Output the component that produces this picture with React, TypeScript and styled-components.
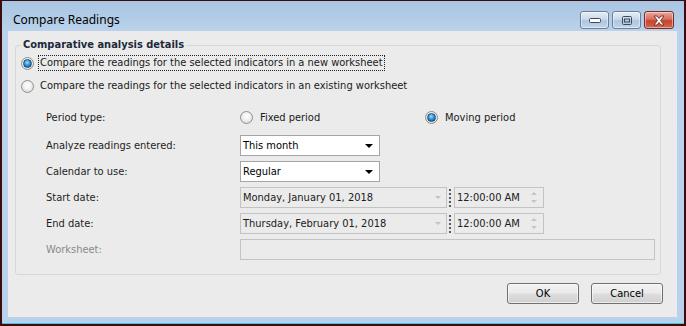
import React from "react";
import styled, { createGlobalStyle } from "styled-components";

const GlobalStyle = createGlobalStyle`
  html, body {
    margin: 0;
    padding: 0;
    background: #ffffff;
  }
  * {
    box-sizing: border-box;
  }
`;

const Window = styled.div`
  width: 686px;
  height: 326px;
  background-color: #3a0c0c;
  padding: 1px 2px 2px 2px;
  display: flex;
  font-family: Tahoma, "DejaVu Sans Condensed", "Liberation Sans", sans-serif;
  font-size: 11px;
  color: #1a1a1a;
`;

const Frame = styled.div`
  flex: 1;
  display: flex;
  flex-direction: column;
  background: linear-gradient(#a8c5e3 0px, #bad2eb 30px, #b9d1ea 100%);
  border-bottom: 1px solid #3fc5e6;
  padding: 0 7px 6px 6px;
`;

const TitleBar = styled.div`
  height: 30px;
  display: flex;
  align-items: flex-start;
  justify-content: space-between;
  padding: 0 3px 0 5px;
`;

const TitleText = styled.span`
  margin-top: 10px;
  font-family: "Noto Sans", "Open Sans", sans-serif;
  font-size: 12px;
  color: #000000;
`;

const CaptionButtons = styled.div`
  margin-top: 10px;
  display: flex;
  gap: 3px;
`;

interface CaptionButtonProps {
  close?: boolean;
}

const CaptionButton = styled.div<CaptionButtonProps>`
  width: ${p => (p.close ? 30 : 29)}px;
  height: 18px;
  border: 1px solid ${p => (p.close ? "#7a2a22" : "#6d7f95")};
  border-radius: 3px;
  display: flex;
  align-items: center;
  justify-content: center;
  background: ${p =>
    p.close
      ? "linear-gradient(#e9a99c 0%, #d7705c 45%, #c7432c 55%, #d2674f 100%)"
      : "linear-gradient(#e6eef7 0%, #c9d9ea 45%, #afc6df 55%, #c2d6ea 100%)"};
  box-shadow: inset 0 0 0 1px rgba(255, 255, 255, 0.45);
`;

const Client = styled.div`
  flex: 1;
  background-color: #ebebeb;
  display: flex;
  flex-direction: column;
  padding: 14px 0 0 7px;
`;

const GroupBox = styled.div`
  position: relative;
  height: 230px;
  margin-right: 16px;
  border: 1px solid #d3d8dc;
  border-radius: 3px;
  display: flex;
  flex-direction: column;
`;

const Legend = styled.span`
  position: absolute;
  top: -8px;
  left: 5px;
  padding: 0 2px;
  background-color: #ebebeb;
  font-weight: bold;
  color: #1c2a3c;
`;

const RadioList = styled.div`
  padding: 9px 0 0 5px;
  display: flex;
  flex-direction: column;
  gap: 7px;
`;

interface FocusProps {
  focused?: boolean;
}

const RadioLabel = styled.label`
  display: flex;
  align-items: center;
  height: 16px;
  gap: 5px;
`;

const RadioText = styled.span<FocusProps>`
  padding: 0 1px;
  line-height: 14px;
  outline: ${p => (p.focused ? "1px dotted #222" : "none")};
`;

interface RadioCircleProps {
  checked?: boolean;
}

const RadioCircle = styled.span<RadioCircleProps>`
  width: 13px;
  height: 13px;
  border-radius: 50%;
  border: 1px solid #8e8f8f;
  background: radial-gradient(circle at 50% 40%, #ffffff 0%, #f0f0f0 45%, #cfcfcf 100%);
  display: flex;
  align-items: center;
  justify-content: center;
  flex-shrink: 0;

  &::after {
    content: "";
    display: ${p => (p.checked ? "block" : "none")};
    width: 7px;
    height: 7px;
    border-radius: 50%;
    border: 1px solid #1b4d7a;
    background: radial-gradient(circle at 45% 35%, #9fdcfb 0%, #2d8ecf 50%, #0e4a86 100%);
  }
`;

const Form = styled.div`
  margin-top: 10px;
  padding: 0 5px 0 30px;
  display: grid;
  grid-template-columns: 194px 1fr;
  grid-template-rows: 26px repeat(5, 21px);
  row-gap: 5px;
  align-items: center;
`;

interface FieldLabelProps {
  disabled?: boolean;
}

const FieldLabel = styled.span<FieldLabelProps>`
  color: ${p => (p.disabled ? "#8a8a8a" : "#1e1e1e")};
`;

const PeriodRow = styled.div`
  display: flex;
  align-items: center;
`;

const PeriodOption = styled.label`
  display: flex;
  align-items: center;
  gap: 7px;
  width: 185px;
`;

const Combo = styled.div`
  width: 140px;
  height: 21px;
  border: 1px solid #a6a6a6;
  background-color: #ffffff;
  display: flex;
  align-items: center;
  justify-content: space-between;
  padding: 0 6px 0 2px;
  color: #000000;
`;

interface ArrowProps {
  light?: boolean;
}

const Arrow = styled.span<ArrowProps>`
  width: 0;
  height: 0;
  border-left: ${p => (p.light ? 3 : 4)}px solid transparent;
  border-right: ${p => (p.light ? 3 : 4)}px solid transparent;
  border-top: ${p => (p.light ? 3 : 4)}px solid ${p => (p.light ? "#c4c4c4" : "#000000")};
`;

const DateRow = styled.div`
  display: flex;
  align-items: center;
  height: 21px;
`;

const DateBox = styled.div`
  width: 207px;
  height: 21px;
  border: 1px solid #c3c3c3;
  display: flex;
  align-items: center;
  justify-content: space-between;
  padding: 0 5px 0 2px;
  color: #202020;
`;

const Splitter = styled.span`
  width: 0;
  height: 18px;
  margin: 0 3px 0 2px;
  border-left: 2px dotted #5a5a5a;
`;

const TimeBox = styled.div`
  width: 90px;
  height: 21px;
  border: 1px solid #c3c3c3;
  display: flex;
  align-items: center;
  justify-content: space-between;
  padding: 0 6px 0 2px;
  color: #202020;
`;

const Spinner = styled.span`
  display: flex;
  flex-direction: column;
  gap: 5px;
`;

const UpArrow = styled.span`
  width: 0;
  height: 0;
  border-left: 3px solid transparent;
  border-right: 3px solid transparent;
  border-bottom: 3px solid #c4c4c4;
`;

const TextBox = styled.div`
  width: 415px;
  height: 21px;
  border: 1px solid #c3c3c3;
`;

const ButtonRow = styled.div`
  margin-top: 8px;
  padding-right: 14px;
  display: flex;
  justify-content: flex-end;
  gap: 12px;
`;

const PushButton = styled.button`
  width: 72px;
  height: 21px;
  border: 1px solid #707070;
  border-radius: 3px;
  background: linear-gradient(#f2f2f2 0%, #ebebeb 45%, #dddddd 55%, #cfcfcf 100%);
  box-shadow: inset 0 0 0 1px rgba(255, 255, 255, 0.6);
  font-family: Tahoma, "DejaVu Sans Condensed", "Liberation Sans", sans-serif;
  font-size: 11px;
  color: #000000;
  padding: 0;
`;

function MinimizeGlyph() {
  return (
    <svg width="12" height="6" viewBox="0 0 12 6">
      <rect x="0.5" y="1.5" width="11" height="4" rx="1" fill="#ffffff" stroke="#3a4b60" />
    </svg>
  );
}

function MaximizeGlyph() {
  return (
    <svg width="10" height="9" viewBox="0 0 10 9">
      <rect x="0.5" y="0.5" width="9" height="8" rx="1" fill="none" stroke="#3a4b60" />
      <rect x="2.5" y="3" width="5" height="3" fill="none" stroke="#3a4b60" />
    </svg>
  );
}

function CloseGlyph() {
  return (
    <svg width="14" height="11" viewBox="0 0 14 11">
      <path
        d="M2 1 L5 1 L7 3.5 L9 1 L12 1 L8.6 5.5 L12 10 L9 10 L7 7.5 L5 10 L2 10 L5.4 5.5 Z"
        fill="#ffffff"
        stroke="#6b2a20"
        strokeWidth="0.9"
        strokeLinejoin="round"
      />
    </svg>
  );
}

interface RadioProps {
  checked?: boolean;
  focused?: boolean;
  text: string;
}

function Radio(props: RadioProps) {
  const { checked, focused, text } = props;
  return (
    <RadioLabel>
      <RadioCircle checked={checked} />
      <RadioText focused={focused}>{text}</RadioText>
    </RadioLabel>
  );
}

export default function App(): JSX.Element {
  return (
    <>
      <GlobalStyle />
      <Window>
        <Frame>
          <TitleBar>
            <TitleText>Compare Readings</TitleText>
            <CaptionButtons>
              <CaptionButton>
                <MinimizeGlyph />
              </CaptionButton>
              <CaptionButton>
                <MaximizeGlyph />
              </CaptionButton>
              <CaptionButton close>
                <CloseGlyph />
              </CaptionButton>
            </CaptionButtons>
          </TitleBar>
          <Client>
            <GroupBox>
              <Legend>Comparative analysis details</Legend>
              <RadioList>
                <Radio checked focused text="Compare the readings for the selected indicators in a new worksheet" />
                <Radio text="Compare the readings for the selected indicators in an existing worksheet" />
              </RadioList>
              <Form>
                <FieldLabel>Period type:</FieldLabel>
                <PeriodRow>
                  <PeriodOption>
                    <RadioCircle />
                    <span>Fixed period</span>
                  </PeriodOption>
                  <PeriodOption>
                    <RadioCircle checked />
                    <span>Moving period</span>
                  </PeriodOption>
                </PeriodRow>

                <FieldLabel>Analyze readings entered:</FieldLabel>
                <Combo>
                  <span>This month</span>
                  <Arrow />
                </Combo>

                <FieldLabel>Calendar to use:</FieldLabel>
                <Combo>
                  <span>Regular</span>
                  <Arrow />
                </Combo>

                <FieldLabel>Start date:</FieldLabel>
                <DateRow>
                  <DateBox>
                    <span>Monday, January 01, 2018</span>
                    <Arrow light />
                  </DateBox>
                  <Splitter />
                  <TimeBox>
                    <span>12:00:00 AM</span>
                    <Spinner>
                      <UpArrow />
                      <Arrow light />
                    </Spinner>
                  </TimeBox>
                </DateRow>

                <FieldLabel>End date:</FieldLabel>
                <DateRow>
                  <DateBox>
                    <span>Thursday, February 01, 2018</span>
                    <Arrow light />
                  </DateBox>
                  <Splitter />
                  <TimeBox>
                    <span>12:00:00 AM</span>
                    <Spinner>
                      <UpArrow />
                      <Arrow light />
                    </Spinner>
                  </TimeBox>
                </DateRow>

                <FieldLabel disabled>Worksheet:</FieldLabel>
                <TextBox />
              </Form>
            </GroupBox>
            <ButtonRow>
              <PushButton>OK</PushButton>
              <PushButton>Cancel</PushButton>
            </ButtonRow>
          </Client>
        </Frame>
      </Window>
    </>
  );
}
